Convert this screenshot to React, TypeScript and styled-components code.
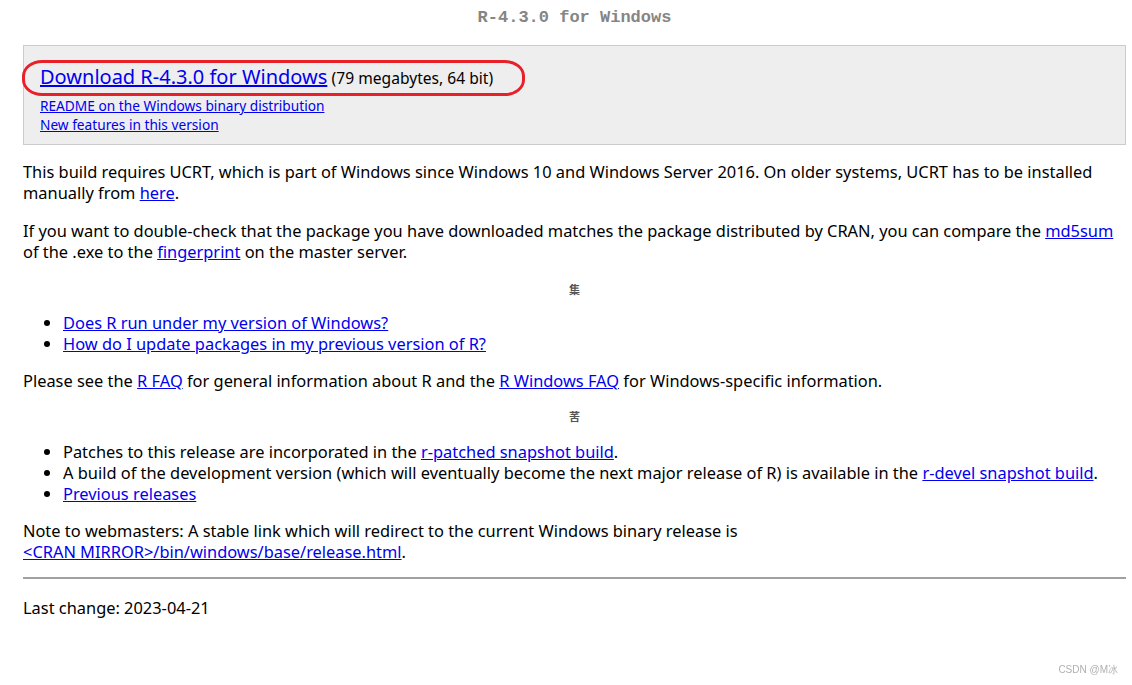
import styled, { createGlobalStyle } from "styled-components";

const GlobalStyle = createGlobalStyle`
  html, body {
    margin: 0;
    padding: 0;
    background: #ffffff;
  }
  body {
    font-family: "Noto Sans", "Open Sans", sans-serif;
    font-size: 16.4px;
    color: #000000;
  }
`;

const links = {
  faq: ["Does R run under my version of Windows?", "How do I update packages in my previous version of R?"],
};

function App() {
  return (
    <>
      <GlobalStyle />
      <Page>
        <Title>R-4.3.0 for Windows</Title>
        <DownloadBox>
          <MainRow>
            <Highlight />
            <BigLink href="#">Download R-4.3.0 for Windows</BigLink>{" "}
            <Size>(79 megabytes, 64 bit)</Size>
          </MainRow>
          <SmallLink href="#">README on the Windows binary distribution</SmallLink>
          <SmallLink href="#">New features in this version</SmallLink>
        </DownloadBox>

        <Para $top={16}>
          This build requires UCRT, which is part of Windows since Windows 10 and Windows Server 2016. On older
          systems, UCRT has to be installed manually from <Link href="#">here</Link>.
        </Para>
        <Para $top={17}>
          If you want to double-check that the package you have downloaded matches the package distributed by CRAN,
          you can compare the <Link href="#">md5sum</Link> of the .exe to the <Link href="#">fingerprint</Link> on
          the master server.
        </Para>

        <Marker $top={15}>
          <Glyph>集</Glyph>
        </Marker>

        <List $top={14}>
          {links.faq.map((text) => (
            <li key={text}>
              <Link href="#">{text}</Link>
            </li>
          ))}
        </List>

        <Para $top={16}>
          Please see the <Link href="#">R FAQ</Link> for general information about R and the{" "}
          <Link href="#">R Windows FAQ</Link> for Windows-specific information.
        </Para>

        <Marker $top={13}>
          <Glyph>䒷</Glyph>
        </Marker>

        <List $top={16}>
          <li>
            Patches to this release are incorporated in the <Link href="#">r-patched snapshot build</Link>.
          </li>
          <li>
            A build of the development version (which will eventually become the next major release of R) is
            available in the <Link href="#">r-devel snapshot build</Link>.
          </li>
          <li>
            <Link href="#">Previous releases</Link>
          </li>
        </List>

        <Para $top={16}>
          Note to webmasters: A stable link which will redirect to the current Windows binary release is
          <br />
          <Link href="#">&lt;CRAN MIRROR&gt;/bin/windows/base/release.html</Link>.
        </Para>

        <Rule />

        <Para $top={18}>Last change: 2023-04-21</Para>
      </Page>
      <Watermark>CSDN @M冰</Watermark>
    </>
  );
}

export default App;

const Page = styled.div`
  padding: 0 6px 0 23px;
  height: 685px;
  box-sizing: border-box;
  overflow: hidden;
`;

const Title = styled.h1`
  margin: 0;
  height: 35px;
  line-height: 35px;
  text-align: center;
  font-family: "Liberation Mono", "DejaVu Sans Mono", monospace;
  font-size: 17px;
  font-weight: 700;
  color: #858585;
`;

const DownloadBox = styled.div`
  margin-top: 10px;
  height: 100px;
  box-sizing: border-box;
  border: 1px solid #cccccc;
  background: #eeeeee;
  padding: 17px 16px 0 16px;
  display: flex;
  flex-direction: column;
  align-items: flex-start;
`;

const MainRow = styled.div`
  position: relative;
  line-height: 28px;
  height: 28px;
  margin-bottom: 5px;
`;

const Highlight = styled.span`
  position: absolute;
  left: -18px;
  right: -32px;
  top: -3px;
  bottom: -5px;
  border: 3px solid #e8202a;
  border-radius: 20px / 16px;
  pointer-events: none;
`;

const BigLink = styled.a`
  font-size: 20px;
  color: #0000ee;
  text-decoration: underline;
`;

const Size = styled.span`
  font-size: 15.6px;
`;

const SmallLink = styled.a`
  font-size: 13.7px;
  line-height: 19px;
  color: #0000ee;
  text-decoration: underline;
`;

const Para = styled.p<{ $top: number }>`
  margin: ${(p) => p.$top}px 0 0 0;
  line-height: 21px;
`;

const Link = styled.a`
  color: #0000ee;
  text-decoration: underline;
`;

const Marker = styled.div<{ $top: number }>`
  margin-top: ${(p) => p.$top}px;
  text-align: center;
  line-height: 21px;
  height: 21px;
`;

const Glyph = styled.span`
  font-family: "Noto Sans CJK SC", sans-serif;
  font-size: 11px;
  font-weight: 700;
  color: #555555;
`;

const List = styled.ul<{ $top: number }>`
  margin: ${(p) => p.$top}px 0 0 0;
  padding-left: 40px;
  line-height: 21px;
`;

const Rule = styled.hr`
  margin: 15px 0 0 0;
  border: none;
  border-top: 2px solid #a0a0a0;
`;

const Watermark = styled.div`
  position: fixed;
  right: 14px;
  bottom: 8px;
  font-family: "Liberation Sans", sans-serif;
  font-size: 10px;
  color: #b0b0b0;
`;
